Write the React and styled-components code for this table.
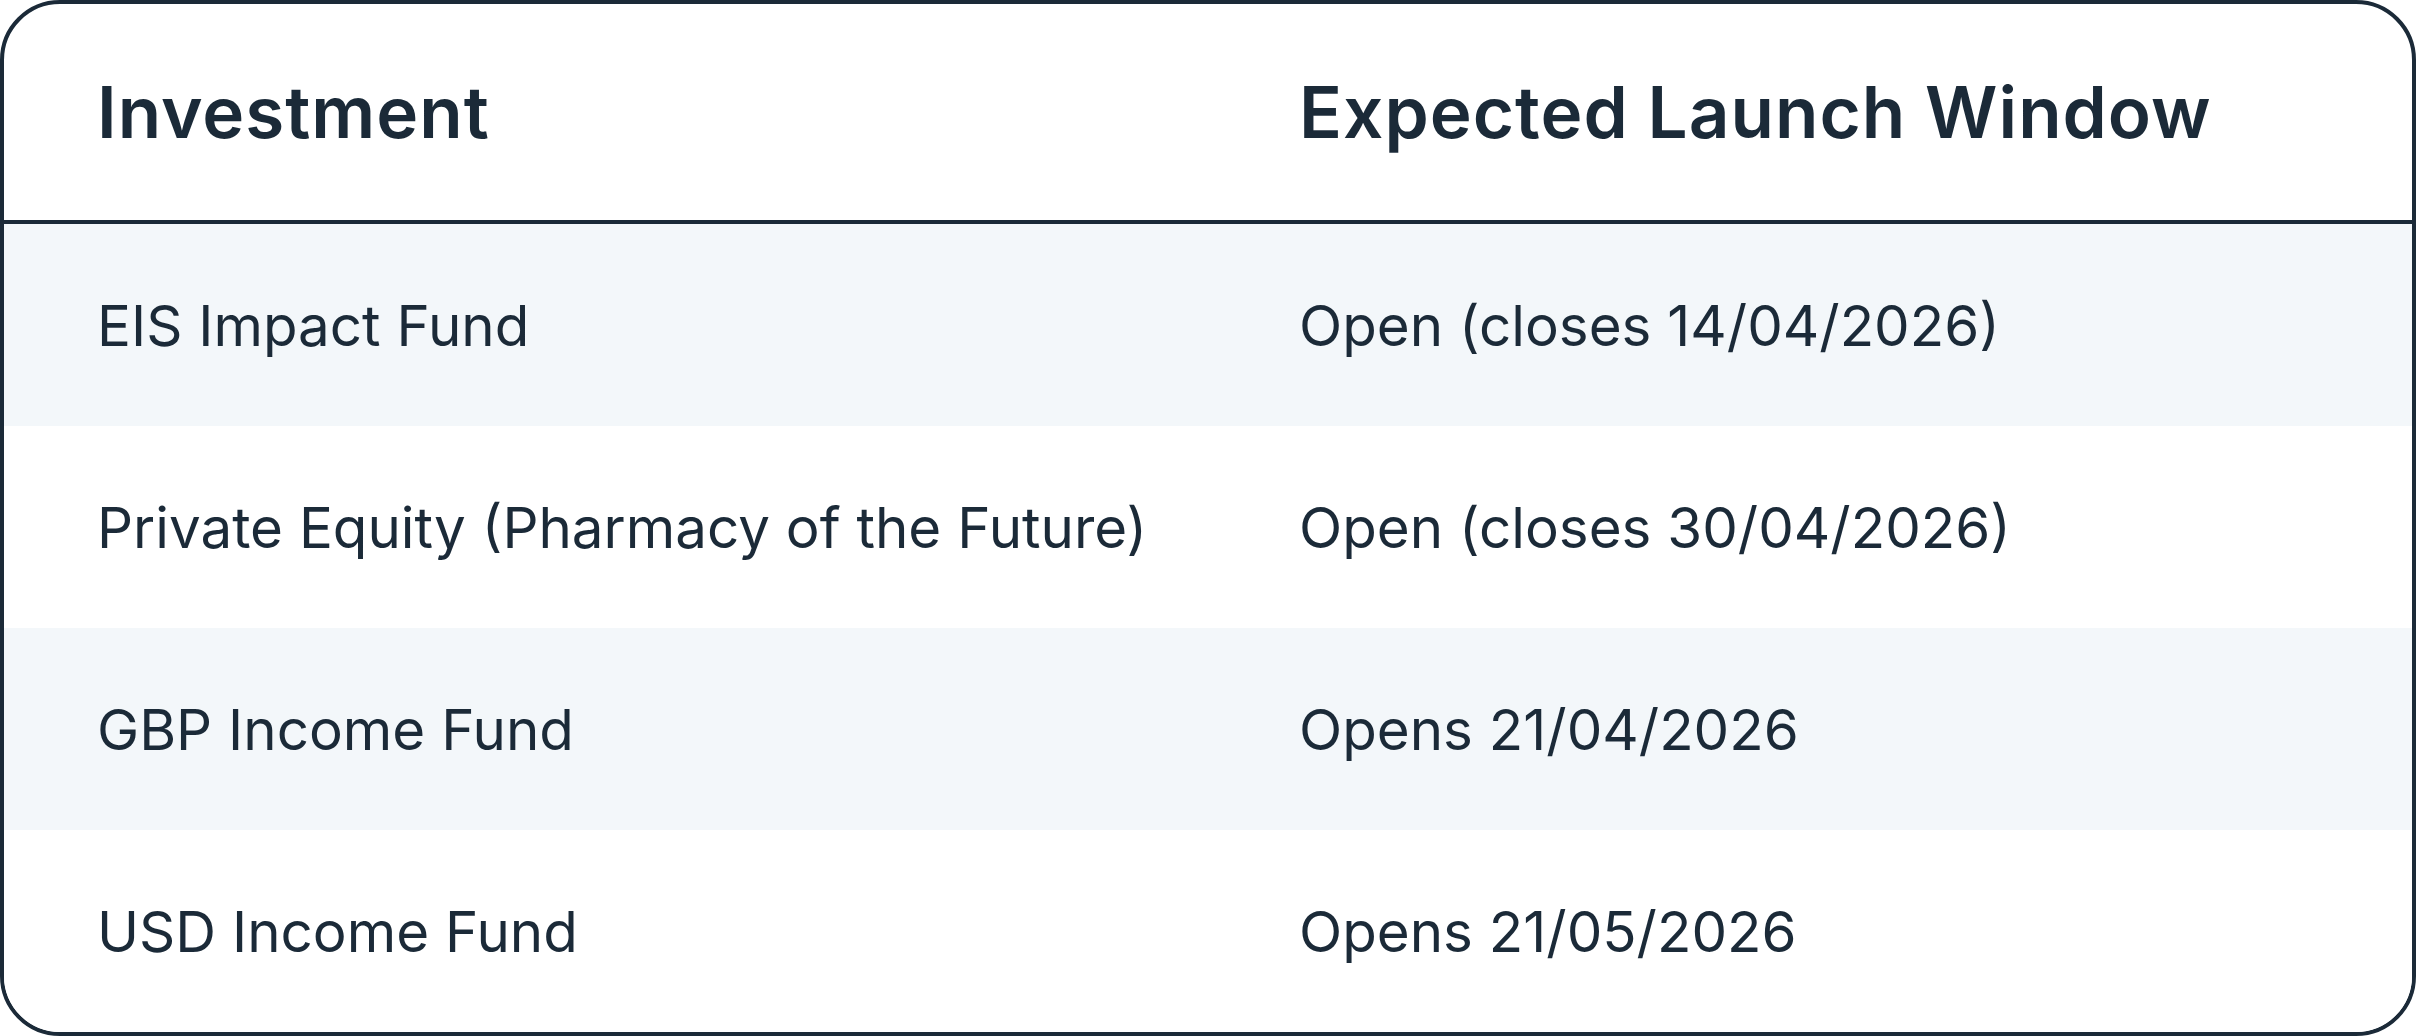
import React from 'react'
import styled, { createGlobalStyle } from 'styled-components'

const GlobalStyle = createGlobalStyle`
  html, body {
    margin: 0;
    padding: 0;
    background: #ffffff;
  }
  * {
    box-sizing: border-box;
  }
`

const Frame = styled.div`
  width: 2416px;
  height: 1036px;
  border: 4px solid #1b2a38;
  border-radius: 60px;
  overflow: hidden;
  display: flex;
  flex-direction: column;
  background: #ffffff;
  color: #1b2a38;
  font-family: Inter, 'Noto Sans', sans-serif;
`

const HeadRow = styled.div`
  display: grid;
  grid-template-columns: 1295px 1fr;
  align-items: center;
  height: 220px;
  border-bottom: 4px solid #1b2a38;
`

const HeadCell = styled.div`
  padding-left: ${({ $first }) => ($first ? '93px' : '0')};
  font-size: 71px;
  font-weight: 600;
  letter-spacing: 1px;
`

const Row = styled.div`
  flex: 1;
  display: grid;
  grid-template-columns: 1295px 1fr;
  align-items: center;
  background: ${({ $striped }) => ($striped ? '#f3f7fa' : '#ffffff')};
`

const Cell = styled.div`
  padding-left: ${({ $first }) => ($first ? '93px' : '0')};
  font-size: 56.5px;
  font-weight: 400;
  letter-spacing: 0;
`

const rows = [
  { name: 'EIS Impact Fund', window: 'Open (closes 14/04/2026)' },
  { name: 'Private Equity (Pharmacy of the Future)', window: 'Open (closes 30/04/2026)' },
  { name: 'GBP Income Fund', window: 'Opens 21/04/2026' },
  { name: 'USD Income Fund', window: 'Opens 21/05/2026' },
]

const App = () => {
  return (
    <>
      <GlobalStyle />
      <Frame>
        <HeadRow>
          <HeadCell $first>Investment</HeadCell>
          <HeadCell>Expected Launch Window</HeadCell>
        </HeadRow>
        {rows.map((row, index) => (
          <Row key={row.name} $striped={index % 2 === 0}>
            <Cell $first>{row.name}</Cell>
            <Cell>{row.window}</Cell>
          </Row>
        ))}
      </Frame>
    </>
  )
}

export default App
